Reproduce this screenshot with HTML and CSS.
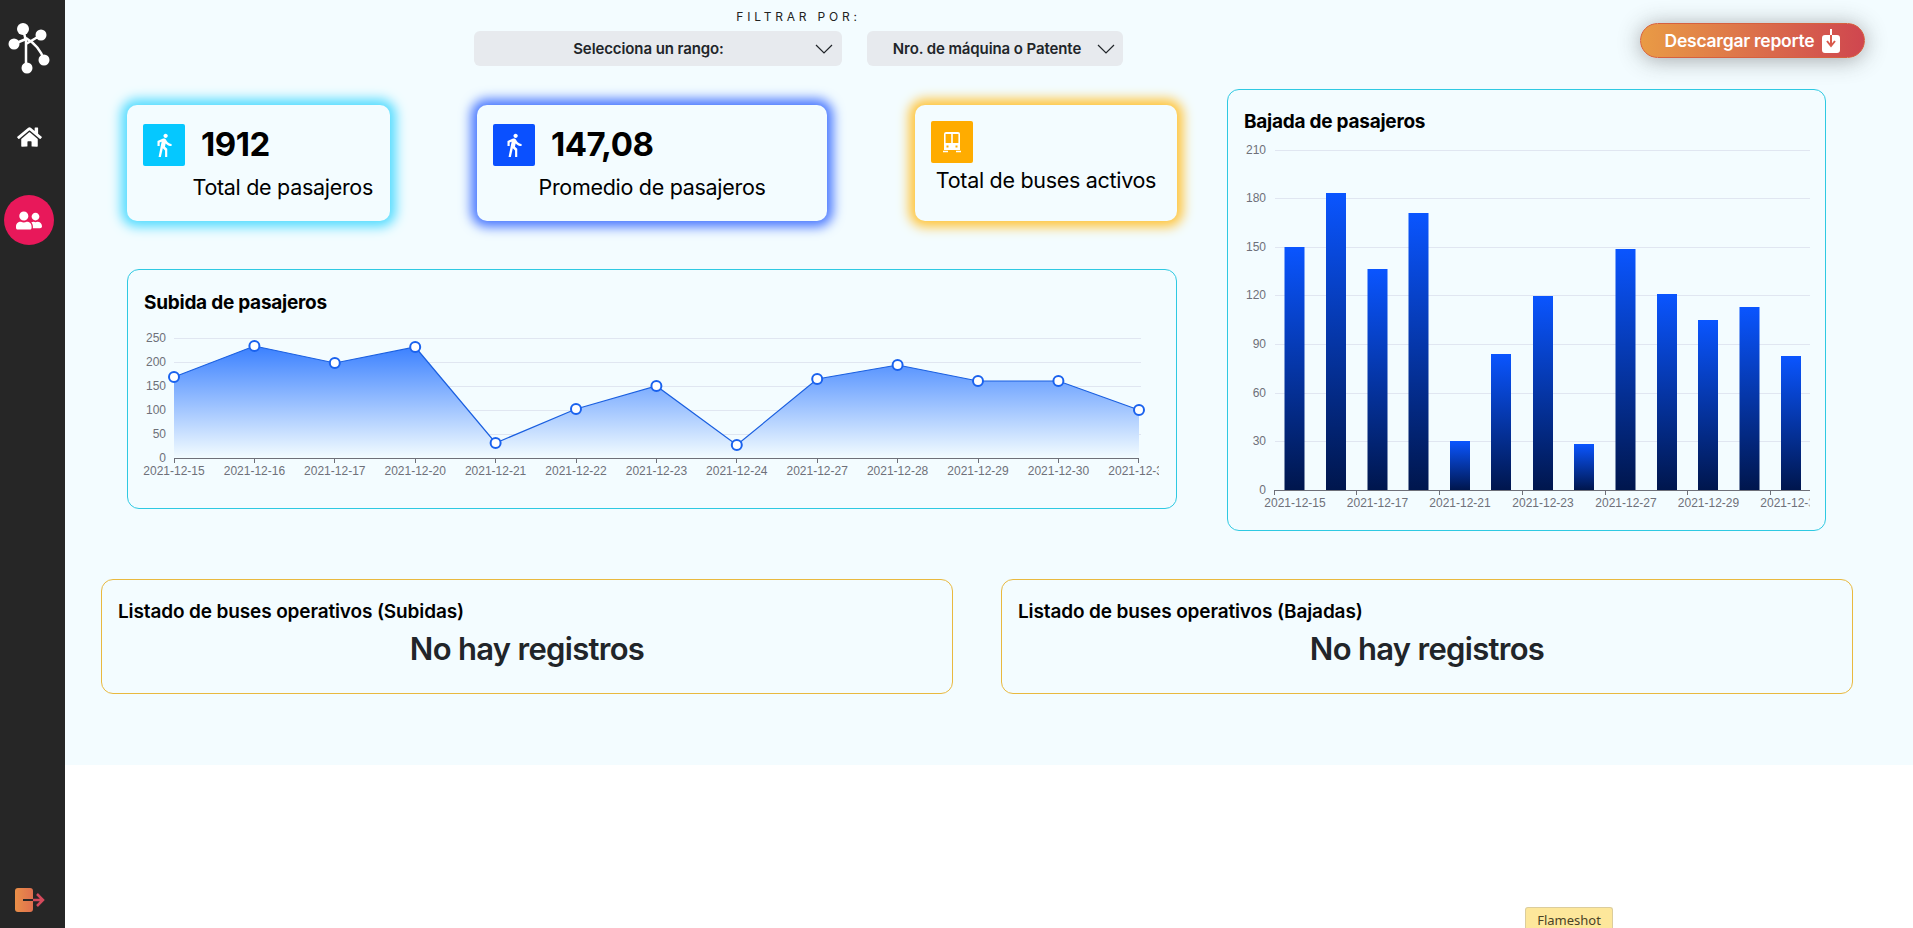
FILE: index.html
```html
<!DOCTYPE html>
<html lang="es">
<head>
	<meta charset="UTF-8">
	<title>Dashboard pasajeros</title>
	<link rel="stylesheet" href="styles.css">
</head>
<body>
<div class="app">
	<nav class="sidebar">
		<svg class="logo" width="65" height="80" viewBox="0 0 65 80">
			<g class="logo-lines">
				<path d="M23 29L26 41M41 35L26 44M14 44L26 39M26 38V68M26 38C36 44 41 50 44 60"/>
			</g>
			<g class="logo-dots">
				<circle cx="23" cy="29" r="6"/>
				<circle cx="41" cy="35" r="5.5"/>
				<circle cx="14" cy="44" r="5.5"/>
				<circle cx="44" cy="60" r="5.5"/>
				<circle cx="27" cy="68" r="5.5"/>
			</g>
		</svg>
		<a class="nav-home">
			<svg width="25" height="22" viewBox="0 0 576 512"><path fill="#fff" d="M280.37 148.26L96 300.11V464a16 16 0 0 0 16 16l112.06-.29a16 16 0 0 0 15.92-16V368a16 16 0 0 1 16-16h64a16 16 0 0 1 16 16v95.64a16 16 0 0 0 16 16.05L464 480a16 16 0 0 0 16-16V300L295.67 148.26a12.19 12.19 0 0 0-15.3 0zM571.6 251.47L488 182.56V44.05a12 12 0 0 0-12-12h-56a12 12 0 0 0-12 12v72.61L318.47 43a48 48 0 0 0-61 0L4.34 251.47a12 12 0 0 0-1.6 16.9l25.5 31A12 12 0 0 0 45.15 301l235.22-193.74a12.19 12.19 0 0 1 15.3 0L530.9 301a12 12 0 0 0 16.9-1.6l25.5-31a12 12 0 0 0-1.7-16.93z"/></svg>
		</a>
		<a class="nav-users">
			<svg width="26" height="21" viewBox="0 0 640 512"><path fill="#fff" d="M192 256c61.9 0 112-50.1 112-112S253.9 32 192 32 80 82.1 80 144s50.1 112 112 112zm76.8 32h-8.3c-20.8 10-43.9 16-68.5 16s-47.6-6-68.5-16h-8.3C51.6 288 0 339.6 0 403.2V432c0 26.5 21.5 48 48 48h288c26.5 0 48-21.5 48-48v-28.8c0-63.6-51.6-115.2-115.2-115.2zM480 256c53 0 96-43 96-96s-43-96-96-96-96 43-96 96 43 96 96 96zm48 32h-3.8c-13.9 4.8-28.6 8-44.2 8s-30.3-3.2-44.2-8H432c-20.4 0-39.2 5.9-55.7 15.4 24.4 26.3 39.7 61.2 39.7 99.8v38.4c0 2.2-.5 4.3-.6 6.4H592c26.5 0 48-21.5 48-48 0-61.9-50.1-112-112-112z"/></svg>
		</a>
		<a class="nav-exit">
			<svg width="30" height="26" viewBox="0 0 30 26">
				<defs>
					<linearGradient id="exitGrad" x1="0" x2="1" y1="0" y2="0">
						<stop offset="0" stop-color="#e98f48"/>
						<stop offset="1" stop-color="#e0704f"/>
					</linearGradient>
				</defs>
				<rect x="0" y="1" width="18" height="24" rx="3" fill="url(#exitGrad)"/>
				<path class="exit-in" d="M8 13H18"/>
				<path class="exit-out" d="M18 13H27M22 7L28 13L22 19"/>
			</svg>
		</a>
	</nav>

	<main class="content">
		<section class="panel">
			<header class="topbar">
				<div class="filters">
					<div class="filters-label">FILTRAR POR:</div>
					<div class="filters-row">
						<div class="select select-range">
							<span>Selecciona un rango:</span>
							<svg class="chevron" width="18" height="10" viewBox="0 0 18 10"><path d="M1 1L9 9L17 1"/></svg>
						</div>
						<div class="select select-bus">
							<span>Nro. de máquina o Patente</span>
							<svg class="chevron" width="18" height="10" viewBox="0 0 18 10"><path d="M1 1L9 9L17 1"/></svg>
						</div>
					</div>
				</div>
				<a class="btn-report">
					<span>Descargar reporte</span>
					<svg width="18" height="24" viewBox="0 0 18 24">
						<path fill="#fff" d="M3 6H8V0H10V6H15A3 3 0 0 1 18 9V21A3 3 0 0 1 15 24H3A3 3 0 0 1 0 21V9A3 3 0 0 1 3 6Z"/>
						<path class="btn-arrow" d="M9 6V16M5 12L9 17L13 12"/>
					</svg>
				</a>
			</header>

			<div class="dash">
				<div class="dash-left">
					<div class="stats">
						<div class="stat stat-cyan">
							<div class="stat-head">
								<span class="stat-icon">
									<svg width="26" height="26" viewBox="0 0 24 24"><path fill="#fff" d="M13.5 5.5c1.1 0 2-.9 2-2s-.9-2-2-2-2 .9-2 2 .9 2 2 2zM9.8 8.9L7 23h2.1l1.8-8 2.1 2v6h2v-7.5l-2.1-2 .6-3C14.8 12 16.8 13 19 13v-2c-1.9 0-3.5-1-4.3-2.4l-1-1.6c-.4-.6-1-1-1.7-1-.3 0-.5.1-.8.1L6 8.3V13h2V9.6l1.8-.7"/></svg>
								</span>
								<span class="stat-value">1912</span>
							</div>
							<div class="stat-label stat-label-end">Total de pasajeros</div>
						</div>
						<div class="stat stat-blue">
							<div class="stat-head">
								<span class="stat-icon">
									<svg width="26" height="26" viewBox="0 0 24 24"><path fill="#fff" d="M13.5 5.5c1.1 0 2-.9 2-2s-.9-2-2-2-2 .9-2 2 .9 2 2 2zM9.8 8.9L7 23h2.1l1.8-8 2.1 2v6h2v-7.5l-2.1-2 .6-3C14.8 12 16.8 13 19 13v-2c-1.9 0-3.5-1-4.3-2.4l-1-1.6c-.4-.6-1-1-1.7-1-.3 0-.5.1-.8.1L6 8.3V13h2V9.6l1.8-.7"/></svg>
								</span>
								<span class="stat-value">147,08</span>
							</div>
							<div class="stat-label">Promedio de pasajeros</div>
						</div>
						<div class="stat stat-amber">
							<div class="stat-head">
								<span class="stat-icon">
									<svg width="18" height="21" viewBox="0 0 18 21"><path fill="#fff" fill-rule="evenodd" d="M3 0H15A2 2 0 0 1 17 2V18H1V2A2 2 0 0 1 3 0ZM2.6 2V11H8.200V2ZM9.800 2V11H15.400V2ZM3.500 13.500V15.500H5.500V13.500ZM12.500 13.500V15.500H14.500V13.500ZM0 18.800H5V20.300H0ZM13 18.800H18V20.300H13Z"/></svg>
								</span>
							</div>
							<div class="stat-label">Total de buses activos</div>
						</div>
					</div>

					<div class="card card-line">
						<h3 class="card-title">Subida de pasajeros</h3>
						<svg class="chart" width="1048" height="187" viewBox="128 321 1048 187">
							<defs>
								<linearGradient id="areaGrad" gradientUnits="userSpaceOnUse" x1="0" x2="0" y1="346" y2="458">
									<stop offset="0" stop-color="#3a80ff"/>
									<stop offset="1" stop-color="#f3fcff"/>
								</linearGradient>
								<clipPath id="lineClip"><rect x="128" y="321" width="1031" height="180"/></clipPath>
							</defs>
							<g class="grid">
								<path d="M174 338.500H1141M174 362.500H1141M174 386.500H1141M174 410.500H1141M174 434.500H1141"/>
							</g>
							<path fill="url(#areaGrad)" d="M174 377L254.400 346L334.800 363L415.200 347L495.600 443L576 409L656.400 386L736.800 445L817.200 379L897.600 365L978 381L1058.400 381L1139 410V458H174Z"/>
							<path class="series-line" d="M174 377L254.400 346L334.800 363L415.200 347L495.600 443L576 409L656.400 386L736.800 445L817.200 379L897.600 365L978 381L1058.400 381L1139 410"/>
							<path class="axis" d="M174 458.500H1139M174.500 458V463M254.500 458V463M334.500 458V463M415.500 458V463M495.500 458V463M576.500 458V463M656.500 458V463M736.500 458V463M817.500 458V463M897.500 458V463M978.500 458V463M1058.500 458V463M1138.500 458V463"/>
							<g class="points">
								<circle cx="174" cy="377" r="5"/><circle cx="254.400" cy="346" r="5"/><circle cx="334.800" cy="363" r="5"/><circle cx="415.200" cy="347" r="5"/><circle cx="495.600" cy="443" r="5"/><circle cx="576" cy="409" r="5"/><circle cx="656.400" cy="386" r="5"/><circle cx="736.800" cy="445" r="5"/><circle cx="817.200" cy="379" r="5"/><circle cx="897.600" cy="365" r="5"/><circle cx="978" cy="381" r="5"/><circle cx="1058.400" cy="381" r="5"/><circle cx="1139" cy="410" r="5"/>
							</g>
							<g class="tick-y">
								<text x="166" y="342">250</text><text x="166" y="366">200</text><text x="166" y="390">150</text><text x="166" y="414">100</text><text x="166" y="438">50</text><text x="166" y="462">0</text>
							</g>
							<g class="tick-x" clip-path="url(#lineClip)">
								<text x="174" y="475">2021-12-15</text><text x="254.400" y="475">2021-12-16</text><text x="334.800" y="475">2021-12-17</text><text x="415.200" y="475">2021-12-20</text><text x="495.600" y="475">2021-12-21</text><text x="576" y="475">2021-12-22</text><text x="656.400" y="475">2021-12-23</text><text x="736.800" y="475">2021-12-24</text><text x="817.200" y="475">2021-12-27</text><text x="897.600" y="475">2021-12-28</text><text x="978" y="475">2021-12-29</text><text x="1058.400" y="475">2021-12-30</text><text x="1139" y="475">2021-12-31</text>
							</g>
						</svg>
					</div>
				</div>

				<div class="card card-bar">
					<h3 class="card-title">Bajada de pasajeros</h3>
					<svg class="chart" width="597" height="380" viewBox="1228 135 597 380">
						<defs>
							<linearGradient id="barGrad" x1="0" x2="0" y1="0" y2="1">
								<stop offset="0" stop-color="#0a55ff"/>
								<stop offset="1" stop-color="#00164d"/>
							</linearGradient>
							<clipPath id="barClip"><rect x="1230" y="135" width="579.600" height="380"/></clipPath>
						</defs>
						<g class="grid">
							<path d="M1275 150.500H1810M1275 198.500H1810M1275 247.500H1810M1275 295.500H1810M1275 344.500H1810M1275 393.500H1810M1275 441.500H1810"/>
						</g>
						<g class="bars">
							<rect x="1284.500" y="247" width="20" height="243"/>
							<rect x="1326" y="193" width="20" height="297"/>
							<rect x="1367.500" y="269" width="20" height="221"/>
							<rect x="1408.500" y="213" width="20" height="277"/>
							<rect x="1450" y="441" width="20" height="49"/>
							<rect x="1491" y="354" width="20" height="136"/>
							<rect x="1533" y="296" width="20" height="194"/>
							<rect x="1574" y="444" width="20" height="46"/>
							<rect x="1615.500" y="249" width="20" height="241"/>
							<rect x="1657" y="294" width="20" height="196"/>
							<rect x="1698" y="320" width="20" height="170"/>
							<rect x="1739.500" y="307" width="20" height="183"/>
							<rect x="1781" y="356" width="20" height="134"/>
						</g>
						<path class="axis" d="M1275 490.500H1810M1274.500 490V495M1356.500 490V495M1439.500 490V495M1522.500 490V495M1605.500 490V495M1687.500 490V495M1770.500 490V495"/>
						<g class="tick-y">
							<text x="1266" y="154">210</text><text x="1266" y="202">180</text><text x="1266" y="251">150</text><text x="1266" y="299">120</text><text x="1266" y="348">90</text><text x="1266" y="397">60</text><text x="1266" y="445">30</text><text x="1266" y="494">0</text>
						</g>
						<g class="tick-x" clip-path="url(#barClip)">
							<text x="1295" y="507">2021-12-15</text><text x="1377.500" y="507">2021-12-17</text><text x="1460" y="507">2021-12-21</text><text x="1543" y="507">2021-12-23</text><text x="1626" y="507">2021-12-27</text><text x="1708.500" y="507">2021-12-29</text><text x="1791" y="507">2021-12-31</text>
						</g>
					</svg>
				</div>
			</div>

			<div class="lists">
				<div class="list-card">
					<h3 class="list-title">Listado de buses operativos (Subidas)</h3>
					<div class="list-empty">No hay registros</div>
				</div>
				<div class="list-card">
					<h3 class="list-title">Listado de buses operativos (Bajadas)</h3>
					<div class="list-empty">No hay registros</div>
				</div>
			</div>
		</section>
	</main>
</div>
<div class="flameshot">Flameshot</div>
</body>
</html>
```

FILE: styles.css
```css
*{
	box-sizing:border-box;
}
html,body{
	margin:0;
	height:928px;
	overflow:hidden;
	background:#fff;
	font-family:"Inter","Liberation Sans",sans-serif;
}
.app{
	display:flex;
	height:928px;
}

/* sidebar */
.sidebar{
	width:65px;
	flex:none;
	background:#262626;
	display:flex;
	flex-direction:column;
	align-items:center;
}
.logo{
	display:block;
	flex:none;
}
.logo-lines path{
	fill:none;
	stroke:#fff;
	stroke-width:2.5;
}
.logo-dots circle{
	fill:#fff;
}
.nav-home{
	display:flex;
	margin-top:46px;
	margin-left:-6px;
	height:22px;
}
.nav-users{
	display:flex;
	align-items:center;
	justify-content:center;
	width:50px;
	height:50px;
	border-radius:50%;
	background:#e8185a;
	margin-top:47px;
	margin-left:-7px;
}
.nav-exit{
	display:flex;
	margin-top:auto;
	margin-bottom:15px;
	margin-left:-5px;
}
.exit-in{
	fill:none;
	stroke:#262626;
	stroke-width:2;
}
.exit-out{
	fill:none;
	stroke:#d44a5c;
	stroke-width:2.5;
}

/* main */
.content{
	flex:1;
	min-width:0;
}
.panel{
	height:765px;
	background:#f3fcff;
}
.topbar{
	display:flex;
	justify-content:space-between;
	align-items:flex-start;
	height:89px;
	padding:0 48px 0 409px;
}
.filters-label{
	height:31px;
	padding-top:10px;
	font-size:12px;
	line-height:14px;
	letter-spacing:3.8px;
	text-align:center;
	color:#222;
}
.filters-row{
	display:flex;
	gap:25px;
}
.select{
	height:35px;
	border-radius:6px;
	background:#e7eaee;
	display:flex;
	align-items:center;
	font-size:15px;
	font-weight:600;
	letter-spacing:-.1px;
	color:#212529;
}
.select span{
	flex:1;
	text-align:center;
}
.select-range{
	width:368px;
	padding:0 9px 0 8px;
}
.select-bus{
	width:256px;
	padding:0 8px 0 10px;
}
.chevron{
	flex:none;
}
.chevron path{
	fill:none;
	stroke:#212529;
	stroke-width:1.2;
}
.btn-report{
	display:flex;
	align-items:center;
	justify-content:center;
	gap:8px;
	width:225px;
	height:35px;
	margin-top:23px;
	border-radius:18px;
	background:linear-gradient(90deg,#e99b45,#cf464f);
	border:1px solid #d6603f;
	box-shadow:0 2px 22px rgba(50,50,50,.42);
	color:#fff;
	font-size:17.5px;
	font-weight:600;
	letter-spacing:-.25px;
}
.btn-arrow{
	fill:none;
	stroke:#d85a4c;
	stroke-width:2;
}

/* grid of charts */
.dash{
	display:flex;
	gap:50px;
	padding-left:62px;
}
.dash-left{
	width:1050px;
	padding-top:16px;
}
.stats{
	display:grid;
	grid-template-columns:263px 350px 263px;
	column-gap:87px;
}
.stat{
	height:116px;
	border-radius:10px;
	background:#f3fcff;
	padding:19px 16px 0;
}
.stat-cyan{
	box-shadow:0 0 12px 6px #55dcff;
}
.stat-blue{
	box-shadow:0 0 12px 6px #4a78ff;
}
.stat-amber{
	box-shadow:0 0 12px 6px #ffc53d;
	padding-top:16px;
	margin-left:1px;
}
.stat-head{
	display:flex;
	align-items:center;
	gap:16px;
}
.stat-icon{
	width:42px;
	height:42px;
	border-radius:2px;
	display:flex;
	align-items:center;
	justify-content:center;
}
.stat-cyan .stat-icon{
	background:#05c8ff;
}
.stat-blue .stat-icon{
	background:#0a50ff;
}
.stat-amber .stat-icon{
	background:#ffac00;
}
.stat-value{
	margin-top:-2px;
	font-size:33px;
	font-weight:700;
	letter-spacing:-.5px;
	color:#000;
}
.stat-label{
	margin-top:8px;
	font-size:21.5px;
	line-height:27px;
	letter-spacing:-.3px;
	white-space:nowrap;
	text-align:center;
	color:#000;
}
.stat-amber .stat-label{
	margin-top:4px;
}
.stat-label-end{
	text-align:right;
	padding-right:1px;
}
.card{
	border:1px solid #2ec9e2;
	border-radius:12px;
}
.card-title{
	margin:0;
	font-size:19px;
	font-weight:700;
	line-height:24px;
	letter-spacing:-.25px;
	color:#000;
}
.chart{
	display:block;
}
.card-line{
	height:240px;
	margin-top:48px;
}
.card-line .card-title{
	padding:21px 0 0 16px;
	height:30px;
	box-sizing:content-box;
}
.card-bar{
	width:599px;
	height:442px;
}
.card-bar .card-title{
	padding:20px 0 0 16px;
	height:25px;
	box-sizing:content-box;
}
.grid path{
	fill:none;
	stroke:#e0e6f1;
	stroke-width:1;
}
.axis{
	fill:none;
	stroke:#6e7079;
	stroke-width:1;
}
.series-line{
	fill:none;
	stroke:#1a5fe0;
	stroke-width:1.2;
}
.points circle{
	fill:#fff;
	stroke:#1a62ee;
	stroke-width:2;
}
.bars rect{
	fill:url(#barGrad);
}
.tick-y text{
	font:12px "Liberation Sans",sans-serif;
	fill:#6e7079;
	text-anchor:end;
}
.tick-x text{
	font:12px "Liberation Sans",sans-serif;
	fill:#6e7079;
	text-anchor:middle;
}

/* tables */
.lists{
	display:flex;
	gap:48px;
	padding:0 0 0 36px;
	margin-top:48px;
}
.list-card{
	width:852px;
	height:115px;
	border:1px solid #e9b93f;
	border-radius:12px;
	padding:21px 16px 0;
}
.list-title{
	margin:0;
	font-size:19px;
	font-weight:600;
	line-height:22px;
	letter-spacing:-.13px;
	color:#000;
}
.list-empty{
	margin-top:6px;
	font-size:31px;
	font-weight:600;
	line-height:40px;
	letter-spacing:-.7px;
	text-align:center;
	color:#212529;
}

/* screenshot tool tab */
.flameshot{
	position:absolute;
	left:1525px;
	top:907px;
	width:88px;
	height:21px;
	background:#fde79b;
	border:1px solid #dccd9c;
	border-bottom:0;
	border-radius:3px 3px 0 0;
	font:13px "Noto Sans",sans-serif;
	line-height:24px;
	text-align:center;
	color:#4a4326;
}
```
